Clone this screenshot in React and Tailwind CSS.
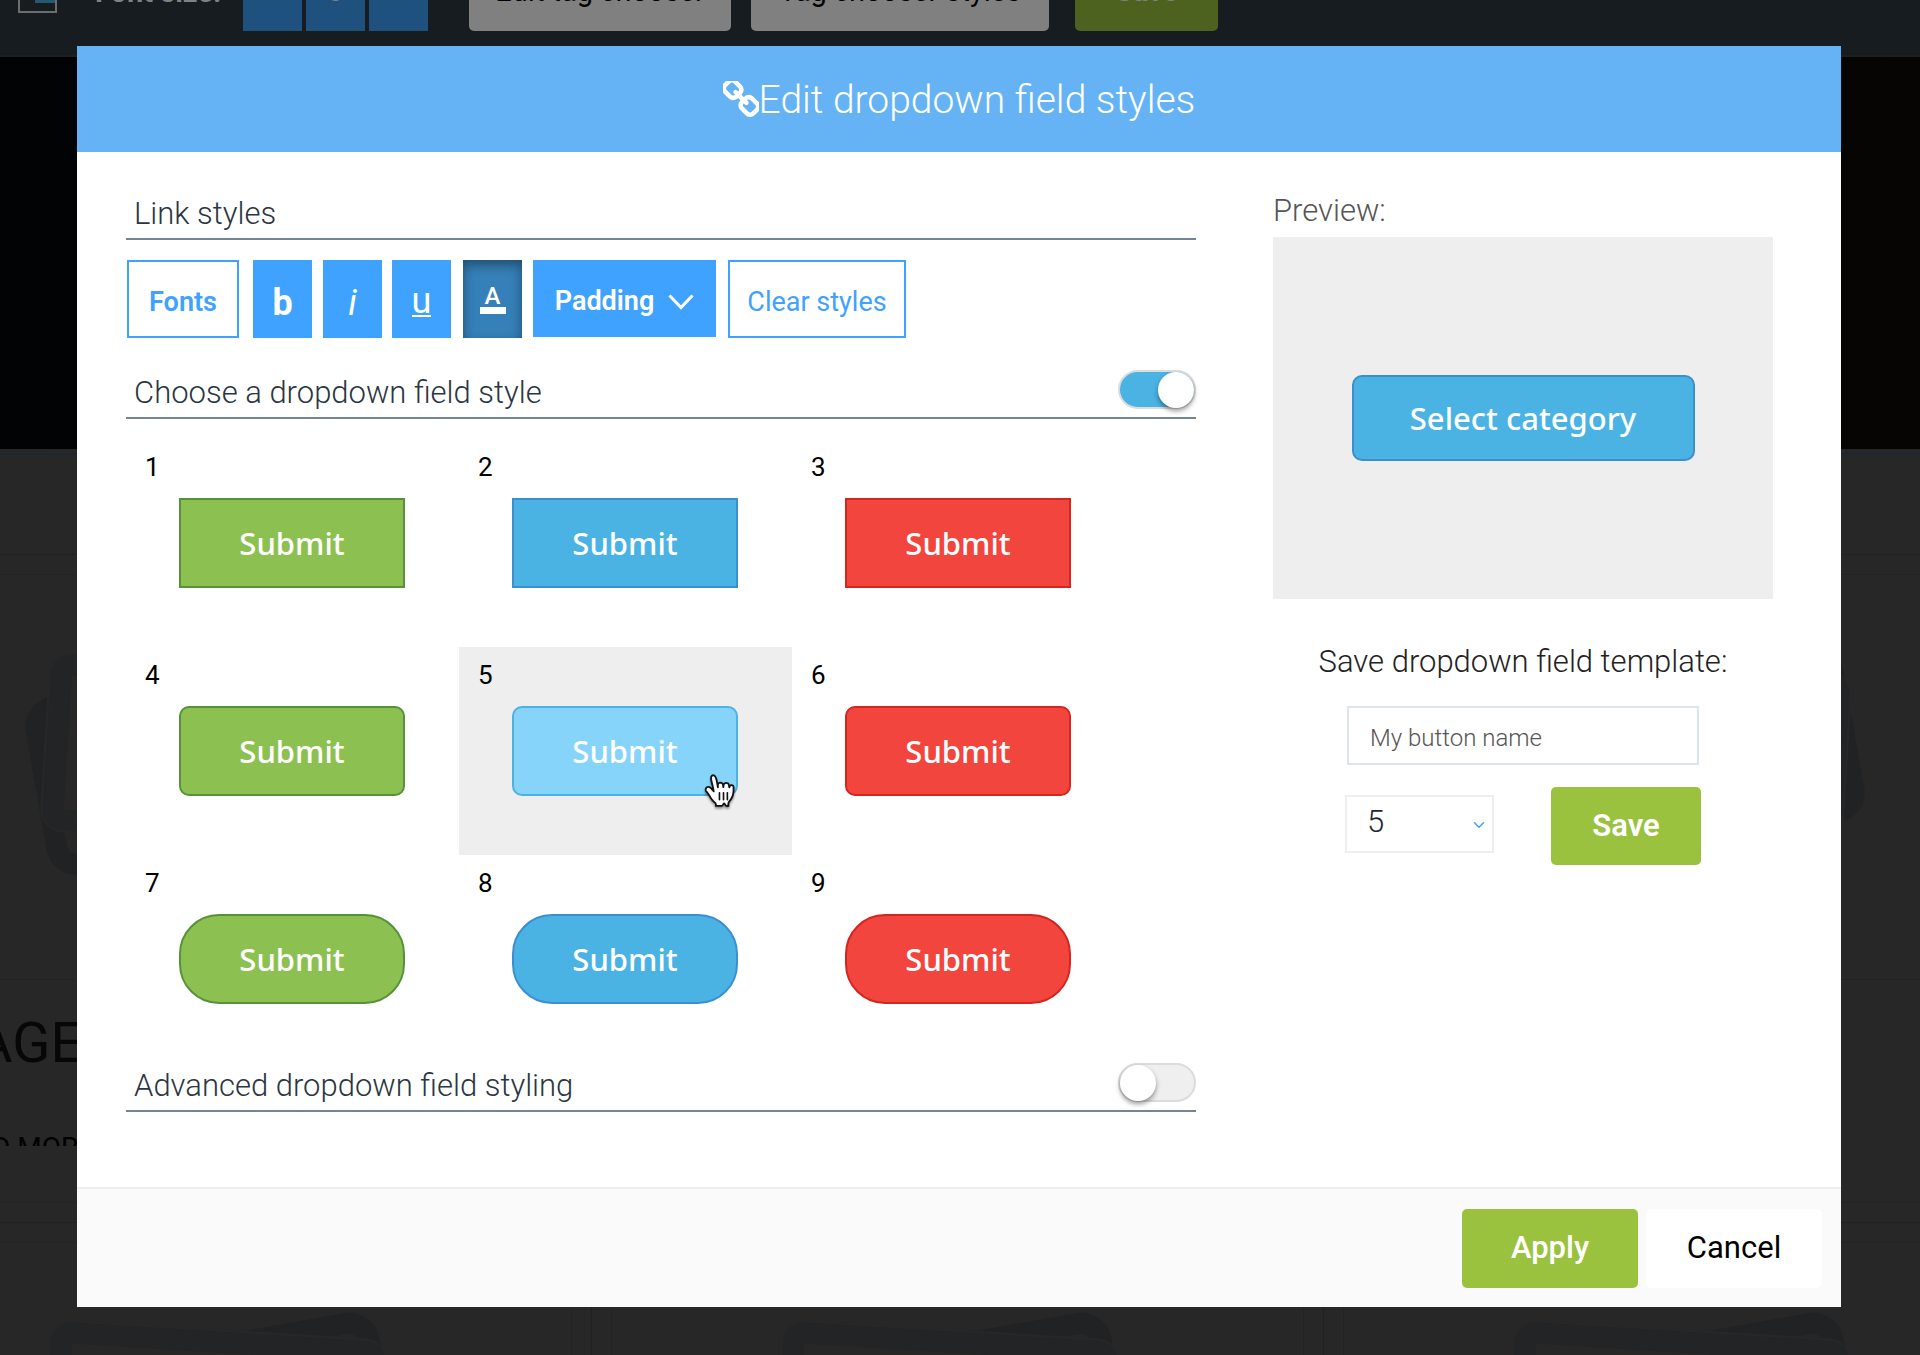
import { useState } from "react";
import { ChevronDown } from "lucide-react";

const SHAPES = ["rounded-none", "rounded-[10px]", "rounded-[40px]"];
const COLORS = [
  "bg-[#8cc152] border-[#56923a]",
  "bg-[#4ab3e4] border-[#3a8fd0]",
  "bg-[#f2453d] border-[#d4251f]",
];
const ACTIVE = "bg-[#86d4f9] border-[#4ab3e4]";
const STYLES = [1, 2, 3, 4, 5, 6, 7, 8, 9];

function ChainIcon() {
  return (
    <svg className="size-9" viewBox="144 144 1504 1504" fill="currentColor" aria-hidden="true">
      <path d="M1520 1216q0-40-28-68l-208-208q-28-28-68-28-42 0-72 32 3 3 19 18.5t21.5 21.5 15 19 13 25.5 3.5 27.5q0 40-28 68t-68 28q-15 0-27.5-3.5t-25.5-13-19-15-21.5-21.5-18.5-19q-33 31-33 73 0 40 28 68l206 207q27 27 68 27 40 0 68-26l147-146q28-28 28-67zm-703-705q0-40-28-68l-206-207q-28-28-68-28-39 0-68 27l-147 146q-28 28-28 67 0 40 28 68l208 208q27 27 68 27 42 0 72-31-3-3-19-18.5t-21.5-21.5-15-19-13-25.5-3.5-27.5q0-40 28-68t68-28q15 0 27.5 3.5t25.5 13 19 15 21.5 21.5 18.5 19q33-31 33-73zm895 705q0 120-85 203l-147 146q-83 83-203 83-121 0-204-85l-206-207q-83-83-83-203 0-123 88-209l-88-88q-86 88-208 88-120 0-204-84l-208-208q-84-84-84-204t85-203l147-146q83-83 203-83 121 0 204 85l206 207q83 83 83 203 0 123-88 209l88 88q86-88 208-88 120 0 204 84l208 208q84 84 84 204z" />
    </svg>
  );
}

function HandCursor() {
  return (
    <svg
      className="pointer-events-none absolute left-[192px] top-[67px] z-10 h-[36px] w-[34px] drop-shadow-[0_2px_1px_rgba(0,0,0,0.4)]"
      viewBox="7.6 7.2 17.6 18.6"
      aria-hidden="true"
    >
      <path
        d="M11.3 20.4c-.3-.4-.6-1.1-1.2-2-.3-.5-1.2-1.5-1.5-1.9-.2-.4-.2-.6-.1-1 .1-.6.7-1.1 1.4-1.1.5 0 1 .4 1.4.7.2.2.5.6.7.8.2.2.2.3.4.5.2.3.3.5.2.1-.1-.5-.2-1.3-.4-2.1-.1-.6-.2-.7-.3-1.1-.1-.5-.2-.8-.3-1.3-.1-.3-.2-1.1-.3-1.5-.1-.5-.1-1.4.3-1.8.3-.3.9-.4 1.3-.2.5.3.8 1 .9 1.3.2.5.4 1.2.5 2 .2 1 .5 2.5.5 2.8 0-.4-.1-1.1 0-1.5.1-.3.3-.7.7-.8.3-.1.6-.1.9-.1.3.1.6.3.8.5.4.6.4 1.9.4 1.8.1-.4.1-1.2.3-1.6.1-.2.5-.4.7-.5.3-.1.7-.1 1 0 .2 0 .6.3.7.5.2.3.3 1.3.4 1.7 0 .1.1-.4.3-.7.4-.6 1.8-.8 1.9.6v1.6c0 .7-.1 1.3-.2 1.8 0 .3-.3 1.2-.5 1.7-.2.4-.5.9-.9 1.5 0 0-.9 1-1 1.5-.1.5-.1.5-.1.8 0 .4.1.8.1.8s-.7.1-1.1 0c-.4-.1-.8-.8-.9-1-.2-.3-.4-.3-.6 0-.2.3-.5 1-.9 1-.7.1-2.1 0-3.1 0 0 0 .2-1-.2-1.4-.3-.3-.8-.8-1.1-1.1l-.8-.9z"
        fill="#fff"
        stroke="#111"
        strokeWidth="0.95"
        strokeLinejoin="round"
      />
      <path d="M15.6 17.4v3.6M17.7 17.4v3.6M19.7 17.4v3.6" stroke="#111" strokeWidth="0.85" strokeLinecap="round" />
    </svg>
  );
}

function PhotosIcon() {
  return (
    <svg className="ml-[129px] h-[260px] w-[410px]" viewBox="5 630 410 260" fill="none" aria-hidden="true">
      <rect x="40" y="679" width="338" height="159" rx="20" stroke="#202223" strokeWidth="21" transform="rotate(-10 211 759)" />
      <g transform="rotate(3.6 210 750)">
        <rect x="40" y="660" width="340" height="181" rx="24" fill="#272727" />
        <rect x="53" y="673" width="314" height="155" rx="10" stroke="#222425" strokeWidth="21" />
      </g>
    </svg>
  );
}

function Card({ children }) {
  return (
    <article className="h-[668px] w-[732px] shrink-0 border-t border-r border-[#1e2228] p-[19px]">
      <div className="flex h-full flex-col border border-[#212328] pt-[56px]">
        <PhotosIcon />
        <div className="mt-[88px] border-t border-[#212328] pt-[31px] pl-[96px]">{children}</div>
      </div>
    </article>
  );
}

function Backdrop() {
  return (
    <div className="flex min-h-screen flex-col bg-[#272727]" aria-hidden="true">
      <div className="-mt-[47px] flex h-[104px] shrink-0 items-start border-b-2 border-[#1d1f20] bg-[#171c20] text-[29px]">
        <div className="ml-[18px] flex h-[60px] w-[39px] items-start justify-end border-2 border-[#6b6d6f]">
          <div className="h-[48px] w-[20px] bg-[#235a70]" />
        </div>
        <span className="ml-[38px] w-[148px] pt-5 leading-[38px] font-bold text-[#808284]">Font size:</span>
        <div className="flex gap-1 text-[#808080]">
          <button type="button" className="h-[78px] w-[59px] bg-[#1f517f]">-</button>
          <button type="button" className="h-[78px] w-[59px] bg-[#1f517f]">8</button>
          <button type="button" className="h-[78px] w-[59px] bg-[#1f517f]">+</button>
        </div>
        <button type="button" className="ml-[41px] h-[78px] w-[262px] rounded-[5px] bg-[#808080] text-black">Edit tag chooser</button>
        <button type="button" className="ml-5 h-[78px] w-[298px] rounded-[5px] bg-[#808080] text-black">Tag chooser styles</button>
        <button type="button" className="ml-[26px] h-[78px] w-[143px] rounded-[5px] bg-[#4e6220] font-bold text-[#808080]">Save</button>
      </div>
      <div className="h-[392px] shrink-0 bg-linear-to-r from-[#020304] via-[#010101] to-[#070504]" />
      <div className="mt-1 h-[101px] shrink-0 border-t-2 border-[#1e2631]" />
      <div className="-ml-[140px] flex h-[668px] shrink-0">
        <Card>
          <p className="h-[70px] text-[56px] leading-[64px] text-[#070707]">AGE</p>
          <p className="ml-4 mt-[53px] h-3 overflow-hidden text-[28px] leading-[28px] text-black">D MOR</p>
        </Card>
        <Card />
        <Card />
      </div>
      <div className="-ml-[140px] flex h-[134px] shrink-0 overflow-hidden">
        <Card />
        <Card />
        <Card />
      </div>
    </div>
  );
}

function SectionHeading({ children, toggle }) {
  return (
    <div className="flex h-[49px] items-end justify-between border-b-2 border-[#768595]">
      <h2 className="pb-1 pl-2 text-[31px] leading-[40px] font-light text-[#2a3642]">{children}</h2>
      {toggle}
    </div>
  );
}

function Toggle({ label, checked, onChange }) {
  return (
    <input
      type="checkbox"
      role="switch"
      aria-label={label}
      checked={checked}
      onChange={onChange}
      className="mb-2 flex h-[39px] w-[78px] shrink-0 appearance-none items-center justify-start rounded-full border-2 border-[#dcdcdc] bg-[#efefef] before:size-9 before:rounded-full before:bg-white before:shadow-[0_3px_5px_rgba(0,0,0,0.4)] checked:justify-end checked:bg-[#4ab3e4]"
    />
  );
}

export default function App() {
  const [selected, setSelected] = useState(5);
  const [choose, setChoose] = useState(true);
  const [advanced, setAdvanced] = useState(false);

  return (
    <div className="relative min-h-screen overflow-hidden font-['Roboto',sans-serif]">
      <Backdrop />
      <div className="absolute inset-0 pt-[46px] pr-[79px] pl-[77px]">
        <div role="dialog" aria-labelledby="dialog-title" className="bg-white">
          <header className="flex h-[106px] items-center justify-center bg-[#65b3f4] text-white">
            <ChainIcon />
            <h1 id="dialog-title" className="pt-[2px] text-[39px] leading-[48px] font-light">Edit dropdown field styles</h1>
          </header>

          <div className="flex gap-[77px] pt-[39px] pr-[68px] pb-[75px] pl-[49px]">
            <section className="min-w-0 flex-1">
              <SectionHeading>Link styles</SectionHeading>
              <div className="mt-5 mb-8 flex h-[78px] items-start pl-[1px] text-[27px] text-white">
                <button type="button" className="h-[78px] w-[112px] border-2 border-[#3fa2ff] pt-[6px] font-semibold text-[#3fa2ff]">Fonts</button>
                <button type="button" aria-label="Bold" className="ml-[14px] h-[78px] w-[59px] bg-[#3fa2ff] pt-2 text-[36px] font-bold">b</button>
                <button type="button" aria-label="Italic" className="ml-[11px] h-[78px] w-[59px] bg-[#3fa2ff] pt-2 text-[36px] italic">i</button>
                <button type="button" aria-label="Underline" className="ml-[10px] flex h-[78px] w-[59px] items-center justify-center bg-[#3fa2ff] pt-[6px] text-[36px]">
                  <span className="border-b-2 border-white leading-[28px]">u</span>
                </button>
                <button
                  type="button"
                  aria-label="Text color"
                  className="ml-3 flex h-[78px] w-[59px] flex-col items-center justify-center bg-[#3580b8] text-[24px] font-medium shadow-[inset_0_5px_12px_rgba(0,0,0,0.4)]"
                >
                  <span className="leading-[22px]">A</span>
                  <span className="h-[7px] w-[26px] bg-white" />
                </button>
                <button type="button" className="ml-[11px] flex h-[77px] w-[183px] items-center justify-center gap-[14px] bg-[#3fa2ff] pt-[6px] font-semibold">
                  Padding
                  <svg className="h-4 w-[26px]" viewBox="0 0 26 16" fill="none" stroke="currentColor" strokeWidth="3" aria-hidden="true">
                    <path d="M1.5 1.5 13 13.5 24.5 1.5" />
                  </svg>
                </button>
                <button type="button" className="ml-3 h-[78px] w-[178px] border-2 border-[#3fa2ff] pt-[6px] text-[#3fa2ff]">Clear styles</button>
              </div>

              <SectionHeading
                toggle={<Toggle label="Choose a dropdown field style" checked={choose} onChange={() => setChoose(!choose)} />}
              >
                Choose a dropdown field style
              </SectionHeading>

              <div className="mt-5 grid auto-rows-[208px] grid-cols-[333px_333px_333px]">
                {STYLES.map((n, i) => (
                  <div key={n} className={`relative pt-[15px] pl-[19px] ${selected === n ? "bg-[#eeeeee]" : ""}`}>
                    <p className="text-[26px] leading-[26px] text-black">{n}</p>
                    <div className="relative mt-[18px] ml-[34px] w-[226px]">
                      <button
                        type="button"
                        onClick={() => setSelected(n)}
                        className={`h-[90px] w-full border-2 font-['Noto_Sans','Open_Sans',sans-serif] text-[31px] font-medium text-white ${SHAPES[Math.floor(i / 3)]} ${selected === n ? ACTIVE : COLORS[i % 3]}`}
                      >
                        Submit
                      </button>
                      {selected === n && <HandCursor />}
                    </div>
                  </div>
                ))}
              </div>

              <SectionHeading
                toggle={<Toggle label="Advanced dropdown field styling" checked={advanced} onChange={() => setAdvanced(!advanced)} />}
              >
                Advanced dropdown field styling
              </SectionHeading>
            </section>

            <aside className="flex w-[500px] shrink-0 flex-col items-center">
              <h2 className="mb-[6px] self-start text-[31px] leading-[40px] font-light text-[#555555]">Preview:</h2>
              <div className="flex h-[362px] w-full items-center justify-center bg-[#eeeeee]">
                <button
                  type="button"
                  className="h-[86px] w-[343px] rounded-[10px] border-2 border-[#3a8fd0] bg-[#4ab3e4] font-['Noto_Sans','Open_Sans',sans-serif] text-[31px] font-medium text-white"
                >
                  Select category
                </button>
              </div>
              <label htmlFor="template-name" className="mt-[43px] text-[31px] leading-[40px] font-light text-[#222222]">
                Save dropdown field template:
              </label>
              <input
                id="template-name"
                type="text"
                placeholder="My button name"
                className="mt-6 h-[59px] w-[352px] border-2 border-[#dce4ee] bg-white px-[21px] pt-1 text-[24px] font-light text-[#555555] placeholder:text-[#555555]"
              />
              <div className="mt-[22px] flex w-[356px] items-start justify-between">
                <div className="relative pt-2">
                  <select
                    aria-label="Template number"
                    value={selected}
                    onChange={(e) => setSelected(Number(e.target.value))}
                    className="h-[58px] w-[149px] appearance-none border-2 border-[#eeeeee] bg-white pb-1 pl-5 text-[31px] leading-[40px] font-light text-[#1d2731]"
                  >
                    {STYLES.map((n) => (
                      <option key={n} value={n}>{n}</option>
                    ))}
                  </select>
                  <ChevronDown className="pointer-events-none absolute top-[29px] right-[6px] size-[18px] text-[#3fa2ff]" aria-hidden="true" />
                </div>
                <button type="button" className="h-[78px] w-[150px] rounded-[5px] bg-[#9bc23f] text-[31px] font-semibold text-white">Save</button>
              </div>
            </aside>
          </div>

          <footer className="flex justify-end gap-2 border-t-2 border-[#eeeeee] bg-[#fafafa] pt-5 pr-[19px] pb-[19px] text-[31px]">
            <button type="button" className="h-[79px] w-[176px] rounded-[5px] bg-[#9bc23f] font-medium text-white">Apply</button>
            <button type="button" className="h-[79px] w-[176px] rounded-[5px] bg-white text-black">Cancel</button>
          </footer>
        </div>
      </div>
    </div>
  );
}
